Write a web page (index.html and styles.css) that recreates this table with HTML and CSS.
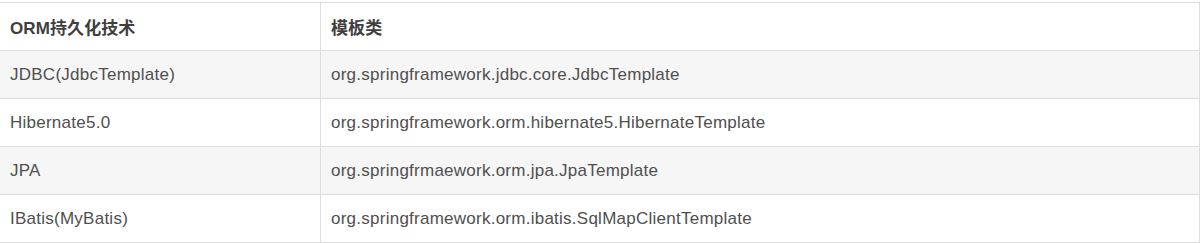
FILE: index.html
```html
<!DOCTYPE html>
<html lang="zh">
<head>
<meta charset="utf-8">
<link rel="stylesheet" href="styles.css">
</head>
<body>
<div class="wrap">
<table class="orm">
  <thead>
    <tr><th class="c1">ORM持久化技术</th><th>模板类</th></tr>
  </thead>
  <tbody>
    <tr class="alt"><td>JDBC(JdbcTemplate)</td><td>org.springframework.jdbc.core.JdbcTemplate</td></tr>
    <tr><td>Hibernate5.0</td><td>org.springframework.orm.hibernate5.HibernateTemplate</td></tr>
    <tr class="alt"><td>JPA</td><td>org.springfrmaework.orm.jpa.JpaTemplate</td></tr>
    <tr><td>IBatis(MyBatis)</td><td>org.springframework.orm.ibatis.SqlMapClientTemplate</td></tr>
  </tbody>
</table>
</div>
</body>
</html>
```
FILE: styles.css
```css
html, body { margin: 0; padding: 0; background: #fff; }
.wrap { padding-top: 2px; margin-left: -1px; }
.orm {
  border-collapse: collapse;
  width: 1201px;
  font-family: "Liberation Sans", Arial, "Noto Sans CJK SC", sans-serif;
  font-size: 17px;
  letter-spacing: 0.25px;
  color: #4f4f4f;
}
.orm th, .orm td {
  border: 1px solid #ddd;
  height: 47px;
  padding: 0 10px;
  text-align: left;
}
.orm th { font-weight: bold; color: #3f3f3f; background: #fff; letter-spacing: 0.1px; }
.orm .c1 { width: 300px; }
.orm tr.alt td { background: #f6f6f6; }
```
